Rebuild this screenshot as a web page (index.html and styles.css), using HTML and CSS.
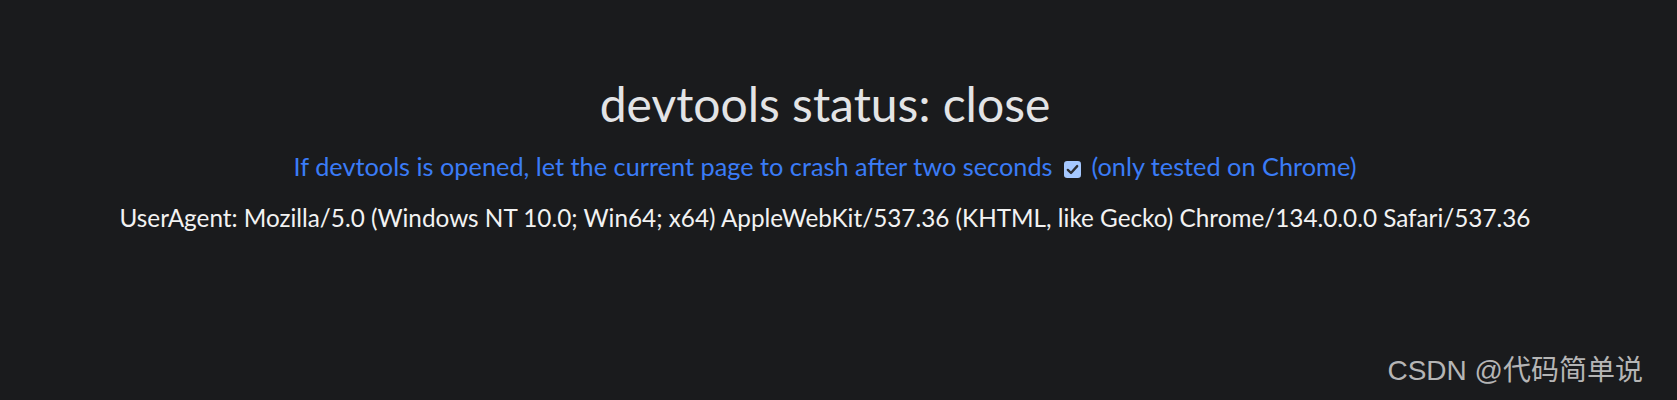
FILE: index.html
```html
<!DOCTYPE html>
<html lang="en">
<head>
<meta charset="utf-8">
<title>devtools status</title>
<link rel="stylesheet" href="styles.css">
</head>
<body>
<main class="page">
  <h1 class="status">devtools status: close</h1>
  <p class="option">
    <label class="option-label">If devtools is opened, let the current page to crash after two seconds <span class="check"><svg viewBox="0 0 16 16" width="17" height="17"><rect x="0" y="0" width="16" height="16" rx="3" fill="#a5c8ff"/><path d="M3.6 8.4 L6.6 11.3 L12.4 4.8" fill="none" stroke="#2b2d31" stroke-width="2.2" stroke-linecap="round" stroke-linejoin="round"/></svg></span> (only tested on Chrome)</label>
  </p>
  <p class="ua">UserAgent: Mozilla/5.0 (Windows NT 10.0; Win64; x64) AppleWebKit/537.36 (KHTML, like Gecko) Chrome/134.0.0.0 Safari/537.36</p>
</main>
<div class="watermark">CSDN @代码简单说</div>
</body>
</html>
```
FILE: styles.css
```css
html, body {
  margin: 0;
  height: 100%;
  background: #1a1b1d;
  overflow: hidden;
}
body {
  font-family: Lato, "Noto Sans", sans-serif;
  position: relative;
}
.page {
  width: 1650px;
  text-align: center;
  padding-top: 74px;
}
.status {
  margin: 0;
  font-size: 48px;
  font-weight: 400;
  line-height: 60px;
  color: #e3e4e6;
}
.option {
  margin: 17px 0 0;
  font-size: 25.3px;
  line-height: 30px;
  color: #3a7cf7;
}
.check {
  display: inline-block;
  vertical-align: -2px;
  margin: 0 4px 0 5px;
}
.check svg { display: block; }
.ua {
  margin: 22px 0 0;
  font-size: 24.3px;
  line-height: 30px;
  color: #f2f2f2;
}
.watermark {
  position: absolute;
  right: 34px;
  bottom: 12px;
  font-family: "Liberation Sans", "Noto Sans CJK SC", sans-serif;
  font-size: 28px;
  color: #b5b5b5;
}
```
